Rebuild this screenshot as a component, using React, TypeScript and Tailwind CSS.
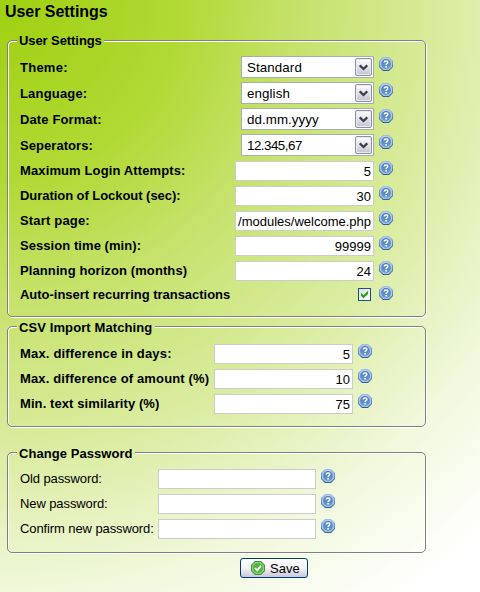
import React from "react";

const labelBase = "block h-5 whitespace-nowrap text-[13px] leading-5 text-black";

function HelpIcon({ className = "" }: { className?: string }) {
  return (
    <svg className={"block h-[14px] w-[14px] shrink-0 " + className} viewBox="0 0 14 14" role="img" aria-label="Help">
      <defs>
        <linearGradient id="helpRim" x1="0" y1="0" x2="0" y2="1">
          <stop offset="0" stopColor="#a4c2e8" />
          <stop offset="1" stopColor="#2c5c9c" />
        </linearGradient>
        <linearGradient id="helpFace" x1="0" y1="0" x2="0" y2="1">
          <stop offset="0" stopColor="#4a7aba" />
          <stop offset="1" stopColor="#6b9dd0" />
        </linearGradient>
        <linearGradient id="helpBand" x1="0" y1="0" x2="0" y2="1">
          <stop offset="0" stopColor="#b4cef0" />
          <stop offset="1" stopColor="#a3c0e4" />
        </linearGradient>
      </defs>
      <path d="M4 0h6l4 4v6l-4 4H4l-4-4V4z" fill="url(#helpRim)" />
      <path d="M4.4 1h5.2L13 4.4v5.2L9.6 13H4.4L1 9.6V4.4z" fill="url(#helpBand)" />
      <circle cx="7" cy="7" r="4.9" fill="url(#helpFace)" />
      <path d="M5.200 5.400C5.200 3.400 8.800 3.400 8.800 5.300C8.800 6.500 7.100 6.500 7.100 8" fill="none" stroke="#fff" strokeWidth="1.500" />
      <rect x="6.300" y="9" width="1.600" height="1.500" fill="#fff" />
    </svg>
  );
}

function Select({ value, spacing }: { value: string; spacing: string }) {
  return (
    <div className="flex h-[22px] w-[133px] border border-[#a5acb2] bg-white">
      <span className={"flex-1 pl-[5px] text-[13.33px] leading-[22px] text-black " + spacing}>{value}</span>
      <span className="mt-px mr-px flex h-[18px] w-[17px] items-center justify-center rounded-[2px] border border-[#8f8fa0] bg-linear-to-b from-white via-[#e2e2ec] to-[#c2c2d2] shadow-[inset_0_0_0_1px_#e9e9f1]">
        <svg className="block h-[7px] w-[9px]" viewBox="0 0 9 7">
          <path d="M.7 1.300L4.500 5L8.300 1.300" fill="none" stroke="#3c3c44" strokeWidth="2.300" />
        </svg>
      </span>
    </div>
  );
}

function TextBox({ value = "", wide = false }: { value?: string; wide?: boolean }) {
  return (
    <div
      className={
        "h-5 overflow-hidden border border-[#cccccc] bg-white pr-[2px] text-right text-[13px] leading-[20px] whitespace-nowrap text-black " +
        (wide ? "w-[158px]" : "w-[139px]")
      }
    >
      {value}
    </div>
  );
}

function Panel({
  title,
  titleClass,
  gap,
  size,
  children,
}: {
  title: string;
  titleClass: string;
  gap: string;
  size: string;
  children: React.ReactNode;
}) {
  return (
    <section className={"relative ml-[7px] w-[419px] " + size}>
      <div
        className={
          "pointer-events-none absolute inset-0 rounded-[5px] border border-[#808080] shadow-[1px_1px_0_#fff,inset_1px_1px_0_#fff] " + gap
        }
      />
      <h2 className={"-mt-2 h-4 pl-3 text-[13px] font-bold whitespace-nowrap text-black " + titleClass}>{title}</h2>
      {children}
    </section>
  );
}

const selects = [
  ["Theme:", "Standard", "tracking-[0.25px]", "tracking-[0.1px]"],
  ["Language:", "english", "tracking-[0.18px]", "tracking-[0.1px]"],
  ["Date Format:", "dd.mm.yyyy", "tracking-[0.12px]", "tracking-[0.07px]"],
  ["Seperators:", "12.345,67", "tracking-[0.05px]", "tracking-[-0.5px]"],
];
const fields = [
  ["Maximum Login Attempts:", "5", "tracking-[0.12px]"],
  ["Duration of Lockout (sec):", "30", "tracking-[-0.05px]"],
  ["Start page:", "/modules/welcome.php", "tracking-[0.18px]"],
  ["Session time (min):", "99999", "tracking-[0.06px]"],
  ["Planning horizon (months)", "24", "tracking-[0.1px]"],
];
const matching = [
  ["Max. difference in days:", "5", "tracking-[0.18px]"],
  ["Max. difference of amount (%)", "10", "tracking-[0.15px]"],
  ["Min. text similarity (%)", "75", "tracking-[0.09px]"],
];
const passwords = ["Old password:", "New password:", "Confirm new password:"];

export default function App() {
  return (
    <main className="flex h-[592px] w-[480px] flex-col overflow-hidden bg-[radial-gradient(circle_at_0_0,#9fd010_0px,#b1d935_180px,#c6e26c_300px,#daeca0_450px,#f1f8dc_592px,#ffffff_720px)] font-['Liberation_Sans',Arial,sans-serif]">
      <h1 className="h-10 pt-[2px] pl-[5px] text-[16px] leading-5 font-bold tracking-[-0.04px] text-black">User Settings</h1>

      <Panel
        title="User Settings"
        titleClass="leading-[18px] tracking-[-0.08px]"
        size="h-[277px]"
        gap="[clip-path:polygon(-2px_-2px,10px_-2px,10px_3px,97px_3px,97px_-2px,422px_-2px,422px_280px,-2px_280px)]"
      >
        <div className="pt-2">
          {selects.map(([label, value, spacing, valueSpacing]) => (
            <div key={label} className="flex h-[26px] items-start pl-[13px]">
              <span className={labelBase + " mt-[2px] w-[221px] font-bold " + spacing}>{label}</span>
              <Select value={value} spacing={valueSpacing} />
              <HelpIcon className="mt-px ml-[5px]" />
            </div>
          ))}
        </div>
        <div className="pt-px">
          {fields.map(([label, value, spacing]) => (
            <div key={label} className="flex h-[25px] items-start pl-[13px]">
              <span className={labelBase + " w-[215px] font-bold " + spacing}>{label}</span>
              <TextBox value={value} />
              <HelpIcon className="ml-[5px]" />
            </div>
          ))}
          <div className="flex items-start pl-[13px]">
            <span className={labelBase + " -mt-px w-[338px] font-bold tracking-[-0.02px]"}>Auto-insert recurring transactions</span>
            <span className="mt-[2px] flex h-[13px] w-[13px] items-center justify-center border border-[#1c5180] bg-linear-to-br from-[#dcdcd7] to-white">
              <svg className="block h-[9px] w-[9px]" viewBox="0 0 9 9">
                <path d="M1 2.800L3.500 5.300L8 .8V4L3.500 8.300L1 5.800z" fill="#21a121" />
              </svg>
            </span>
            <HelpIcon className="ml-2" />
          </div>
        </div>
      </Panel>

      <Panel
        title="CSV Import Matching"
        titleClass="leading-[20px] tracking-[0.1px]"
        size="mt-[9px] h-[101px]"
        gap="[clip-path:polygon(-2px_-2px,10px_-2px,10px_3px,148px_3px,148px_-2px,422px_-2px,422px_104px,-2px_104px)]"
      >
        <div className="pt-[10px]">
          {matching.map(([label, value, spacing]) => (
            <div key={label} className="flex h-[25px] items-start pl-[13px]">
              <span className={labelBase + " w-[194px] font-bold " + spacing}>{label}</span>
              <TextBox value={value} />
              <HelpIcon className="ml-[5px]" />
            </div>
          ))}
        </div>
      </Panel>

      <Panel
        title="Change Password"
        titleClass="leading-[20px] tracking-[0.06px]"
        size="mt-[25px] h-[101px]"
        gap="[clip-path:polygon(-2px_-2px,10px_-2px,10px_3px,128px_3px,128px_-2px,422px_-2px,422px_104px,-2px_104px)]"
      >
        <div className="pt-[9px]">
          {passwords.map((label) => (
            <div key={label} className="flex h-[25px] items-start pl-[13px]">
              <span className={labelBase + " w-[138px] tracking-[-0.1px]"}>{label}</span>
              <TextBox wide />
              <HelpIcon className="ml-[5px]" />
            </div>
          ))}
        </div>
      </Panel>

      <button className="mt-[5px] ml-[240px] flex h-5 w-[68px] items-center rounded-[3px] border border-[#003c74] bg-linear-to-b from-white via-[#f4f4f8] to-[#c8c8dc] pl-[10px] text-[13px] leading-[18px] text-black">
        <svg className="block h-[14px] w-[14px]" viewBox="0 0 14 14">
          <path d="M4 0h6l4 4v6l-4 4H4l-4-4V4z" fill="#3b9632" />
          <path d="M4.400 1h5.200L13 4.400v5.200L9.600 13H4.400L1 9.600V4.400z" fill="#8fd27c" />
          <circle cx="7" cy="7" r="5" fill="#56b347" />
          <path d="M4 7l2.200 2.300L10 4.800" fill="none" stroke="#fff" strokeWidth="1.800" />
        </svg>
        <span className="ml-[5px] pt-px">Save</span>
      </button>
    </main>
  );
}
